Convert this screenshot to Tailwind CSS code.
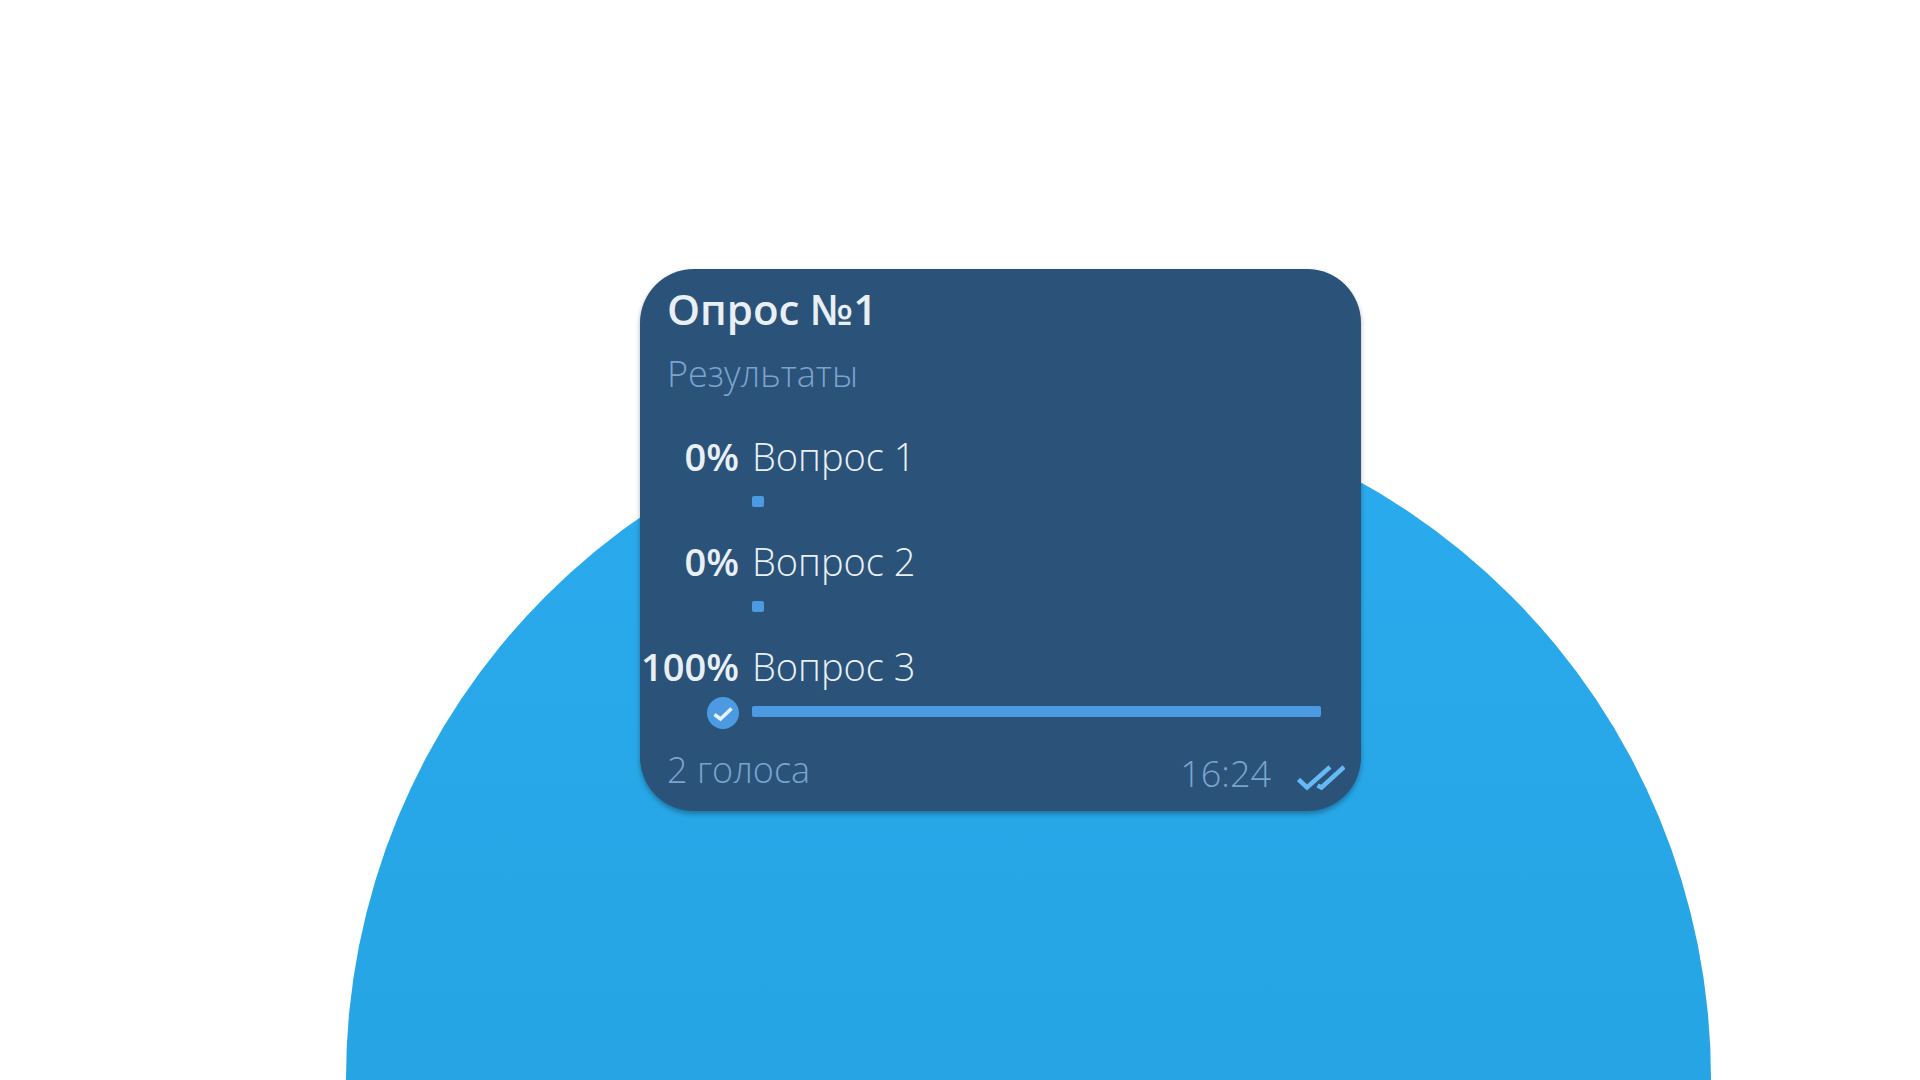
<!DOCTYPE html>
<html lang="ru">
<head>
<meta charset="utf-8">
<meta name="viewport" content="width=device-width, initial-scale=1">
<title>Опрос №1</title>
<script src="https://cdn.jsdelivr.net/npm/@tailwindcss/browser@4"></script>
</head>
<body class="bg-white">
<main class="relative min-h-screen overflow-hidden pt-[269px] font-['Open_Sans','Noto_Sans',sans-serif] text-[38px] leading-[48px] font-light text-[#e8f0f6]">
  <!-- Backdrop disc, centred on the bottom edge -->
  <div class="absolute top-[396px] left-[346px] size-[1365px] rounded-full bg-linear-to-b from-[#2aabee] to-[#229ed9]" aria-hidden="true"></div>

  <article class="relative ml-[33.3333%] w-full max-w-[721px] rounded-[54px] bg-[#2b5278] pt-4 pb-[13px] shadow-[0_3px_5px_rgba(0,0,0,0.3)]">
    <header class="px-[27px]">
      <h1 class="text-[42px] font-semibold">Опрос №1</h1>
      <p class="mt-[17px] text-[36px] text-[#7aa4d0]">Результаты</p>
    </header>

    <ul class="mt-[34px] flex flex-col gap-[18px] pr-10">
      <li class="grid grid-cols-[99px_1fr] gap-x-[13px] gap-y-[7px]">
        <span class="justify-self-end font-semibold">0%</span>
        <span>Вопрос 1</span>
        <span class="h-8"></span>
        <div class="flex items-center pb-[3px]"><div class="h-[11px] w-3 rounded-xs bg-[#4c9be2]"></div></div>
      </li>
      <li class="grid grid-cols-[99px_1fr] gap-x-[13px] gap-y-[7px]">
        <span class="justify-self-end font-semibold">0%</span>
        <span>Вопрос 2</span>
        <span class="h-8"></span>
        <div class="flex items-center pb-[3px]"><div class="h-[11px] w-3 rounded-xs bg-[#4c9be2]"></div></div>
      </li>
      <li class="grid grid-cols-[99px_1fr] gap-x-[13px] gap-y-[7px]">
        <span class="justify-self-end font-semibold">100%</span>
        <span>Вопрос 3</span>
        <svg class="size-8 justify-self-end" viewBox="0 0 32 32" fill="none" aria-hidden="true">
          <circle cx="16" cy="16" r="16" fill="#4c9be2"/>
          <path d="M7.500 17.500 13.500 22 24.500 11.500" stroke="#e8f4ff" stroke-width="3.500"/>
        </svg>
        <div class="flex items-center pb-[3px]"><div class="h-[11px] w-full rounded-xs bg-[#4c9be2]"></div></div>
      </li>
    </ul>

    <footer class="mt-[17px] flex justify-between pr-4 pl-[27px] text-[36px] text-[#7aa4d0]">
      <span>2 голоса</span>
      <span class="flex items-center gap-[26px] pt-1">
        <time datetime="16:24">16:24</time>
        <svg class="mt-2 h-[26px] w-12" viewBox="0 0 48 26" fill="none" stroke="#65b9f4" stroke-width="4.500" aria-label="Прочитано">
          <path d="M1.500 14.500 10 22.500 33 2M20.500 20.500 24.500 22.500 47 2"/>
        </svg>
      </span>
    </footer>
  </article>
</main>
</body>
</html>
